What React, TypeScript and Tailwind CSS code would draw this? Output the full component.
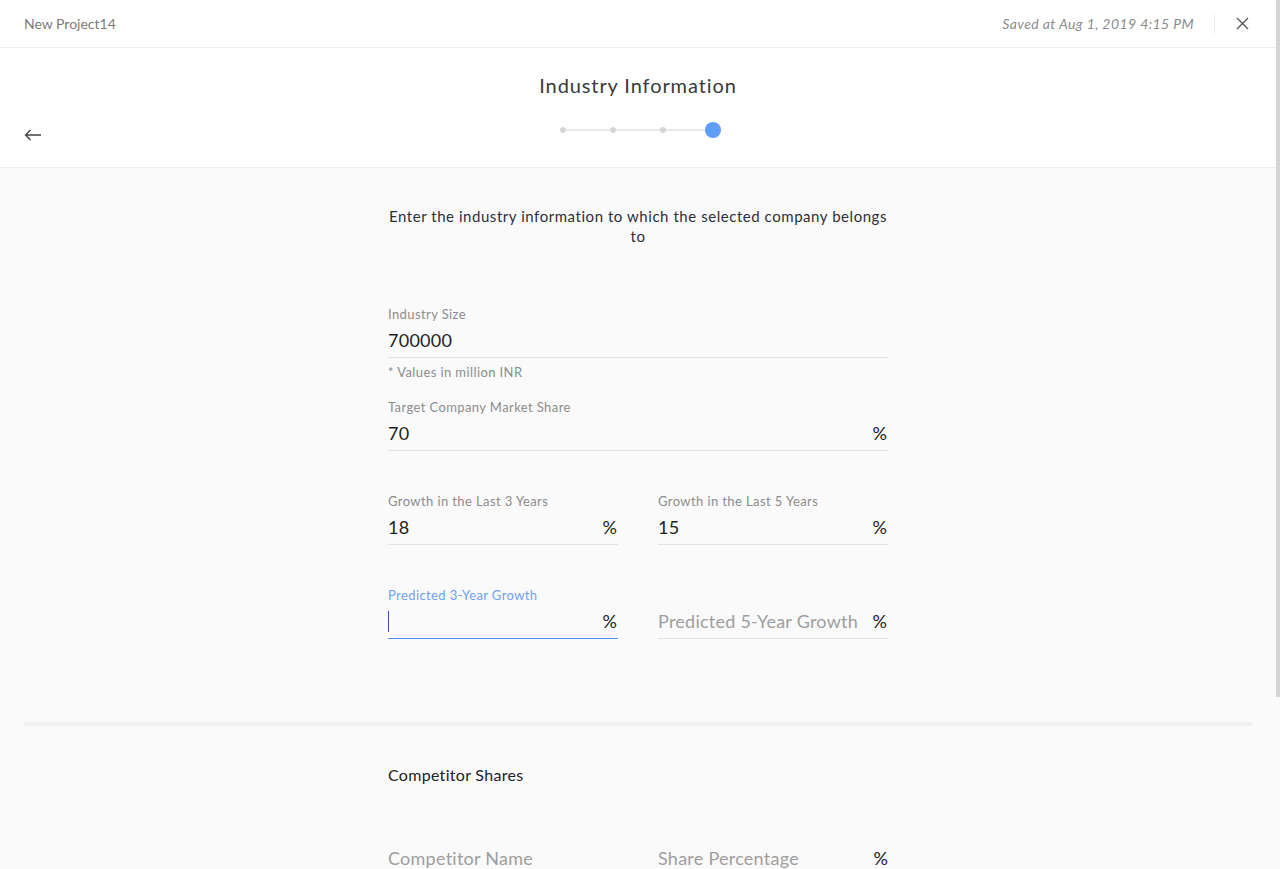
import React from "react";

const font = { fontFamily: "Lato, 'Open Sans', sans-serif" };

function Field({
  label,
  value,
  placeholder,
  suffix,
  focused,
}: {
  label?: string;
  value?: string;
  placeholder?: string;
  suffix?: boolean;
  focused?: boolean;
}) {
  return (
    <div className="flex flex-col">
      {label ? (
        <div
          className={`text-[13px] leading-[18px] tracking-[0.4px] ${focused ? "text-[#6fa0f2]" : "text-[#8c8c8c]"}`}
        >
          {label}
        </div>
      ) : (
        <div className="h-[18px]" />
      )}
      <div
        className={`mt-[5px] flex items-center pb-[5px] border-b ${
          focused ? "border-[#5b8def]" : "border-[#e3e3e3]"
        }`}
      >
        <div className="flex-1 h-[24px] flex items-center text-[18px] leading-[24px] tracking-[0.25px]">
          {focused && <span className="w-[1px] h-[21px] bg-[#3d4fc4]" />}
          {value && <span className="text-[#1f1f1f]">{value}</span>}
          {!value && placeholder && <span className="text-[#9e9e9e]">{placeholder}</span>}
        </div>
        {suffix && <span className="text-[18px] leading-[24px] text-[#222] pr-[1px]">%</span>}
      </div>
    </div>
  );
}

export default function App() {
  return (
    <div className="w-[1280px] h-[869px] overflow-hidden flex bg-[#fafafa]" style={font}>
      <div className="flex-1 flex flex-col min-w-0">
        {/* top bar */}
        <div className="h-[48px] shrink-0 bg-white border-b border-[#eeeeee] flex items-center pl-[24px] pr-[27px]">
          <div className="text-[14px] text-[#7b7b7b] flex-1">New Project14</div>
          <div className="text-[14px] italic text-[#8c8c8c] tracking-[0.4px]">Saved at Aug 1, 2019 4:15 PM</div>
          <div className="ml-[20px] w-[1px] h-[20px] bg-[#eeeeee]" />
          <svg className="ml-[21px]" width="13" height="13" viewBox="0 0 13 13">
            <path d="M1 1L12 12M12 1L1 12" stroke="#555" strokeWidth="1.3" fill="none" />
          </svg>
        </div>
        {/* step header */}
        <div className="h-[120px] shrink-0 bg-white border-b border-[#eeeeee] grid grid-cols-[1fr_auto_1fr]">
          <div className="flex items-end pl-[24px] pb-[26px]">
            <svg width="18" height="12" viewBox="0 0 18 12">
              <path d="M17 6H1.5M6.5 1L1.5 6L6.5 11" stroke="#444" strokeWidth="1.4" fill="none" />
            </svg>
          </div>
          <div className="flex flex-col items-center pt-[23px]">
            <div className="text-[20px] leading-[28px] text-[#3a3a3a] tracking-[0.9px]">Industry Information</div>
            <div className="mt-[23px] relative w-[160px] h-[16px] flex items-center">
              <div className="absolute left-[4px] right-[10px] h-[2px] bg-[#e8e8e8]" />
              <div className="relative flex items-center w-full">
                <div className="shrink-0 ml-[2px] w-[6px] h-[6px] rounded-full bg-[#d6d6d6]" />
                <div className="shrink-0 ml-[44px] w-[6px] h-[6px] rounded-full bg-[#d6d6d6]" />
                <div className="shrink-0 ml-[44px] w-[6px] h-[6px] rounded-full bg-[#d6d6d6]" />
                <div className="shrink-0 ml-[39px] w-[16px] h-[16px] rounded-full bg-[#5f9ef6]" />
              </div>
            </div>
          </div>
          <div />
        </div>
        {/* main */}
        <div className="flex-1 flex flex-col">
          <div className="w-[500px] mx-auto pt-[38px]">
            <div className="text-[15px] leading-[20px] text-[#2e2e3a] text-center tracking-[0.55px]">
              Enter the industry information to which the selected company belongs
              <br />
              to
            </div>
            <div className="mt-[59px]">
              <Field label="Industry Size" value="700000" />
              <div className="mt-[5px] text-[13px] leading-[18px] text-[#8c8c8c] tracking-[0.4px]">* Values in million INR</div>
            </div>
            <div className="mt-[17px]">
              <Field label="Target Company Market Share" value="70" suffix />
            </div>
            <div className="mt-[41px] grid grid-cols-2 gap-x-[40px]">
              <Field label="Growth in the Last 3 Years" value="18" suffix />
              <Field label="Growth in the Last 5 Years" value="15" suffix />
            </div>
            <div className="mt-[41px] grid grid-cols-2 gap-x-[40px]">
              <Field label="Predicted 3-Year Growth" focused suffix />
              <Field placeholder="Predicted 5-Year Growth" suffix />
            </div>
          </div>
          <div className="mx-[24px] mt-[83px] h-[4px] bg-[#f1f1f1]" />
          <div className="w-[500px] mx-auto pt-[39px]">
            <div className="text-[16px] leading-[20px] text-[#222] tracking-[0.3px]">Competitor Shares</div>
            <div className="mt-[61px] grid grid-cols-2 gap-x-[40px]">
              <div className="text-[18px] leading-[24px] text-[#9e9e9e] tracking-[0.25px]">Competitor Name</div>
              <div className="flex text-[18px] leading-[24px]">
                <span className="flex-1 text-[#9e9e9e] tracking-[0.25px]">Share Percentage</span>
                <span className="text-[#222]">%</span>
              </div>
            </div>
          </div>
        </div>
      </div>
      {/* scrollbar */}
      <div className="w-[4px] shrink-0 flex flex-col">
        <div className="h-[697px] bg-[#d4d4d4]" />
      </div>
    </div>
  );
}
